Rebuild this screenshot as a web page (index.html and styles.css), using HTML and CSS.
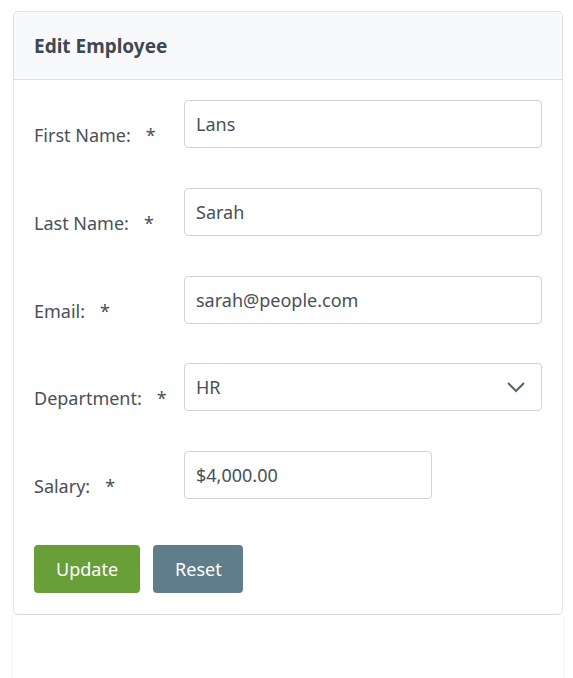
FILE: index.html
```html
<!DOCTYPE html>
<html>
<head>
<meta charset="utf-8">
<link rel="stylesheet" href="styles.css">
</head>
<body>
<div class="page">
  <div class="card">
    <div class="card-header">Edit Employee</div>
    <form class="card-body">
      <div class="row">
        <label class="label">First Name:<span class="req">*</span></label>
        <div class="field"><div class="input">Lans</div></div>
      </div>
      <div class="row">
        <label class="label">Last Name:<span class="req">*</span></label>
        <div class="field"><div class="input">Sarah</div></div>
      </div>
      <div class="row">
        <label class="label">Email:<span class="req">*</span></label>
        <div class="field"><div class="input">sarah@people.com</div></div>
      </div>
      <div class="row">
        <label class="label">Department:<span class="req">*</span></label>
        <div class="field">
          <div class="input select">HR
            <svg class="chev" width="20" height="12" viewBox="0 0 20 12"><path d="M2 2 L10 10 L18 2" fill="none" stroke="#5a6570" stroke-width="2.2"/></svg>
          </div>
        </div>
      </div>
      <div class="row">
        <label class="label">Salary:<span class="req">*</span></label>
        <div class="field"><div class="input short">$4,000.00</div></div>
      </div>
      <div class="buttons">
        <button type="button" class="btn btn-update">Update</button>
        <button type="button" class="btn btn-reset">Reset</button>
      </div>
    </form>
  </div>
  <div class="card-next"></div>
</div>
</body>
</html>
```
FILE: styles.css
```css
* { box-sizing: border-box; }
html, body { margin: 0; padding: 0; background: #fff; }
body {
  font-family: "Noto Sans", "Open Sans", sans-serif;
  color: #495057;
}
.page {
  padding: 11px 10px 0 13px;
}
.card {
  width: 550px;
  border: 1px solid #dee2e6;
  border-radius: 5px;
  background: #fff;
}
.card-header {
  height: 68px;
  background: #f8f9fa;
  border-bottom: 1px solid #dee2e6;
  border-radius: 5px 5px 0 0;
  padding: 0 20px;
  display: flex;
  align-items: center;
  font-size: 19px;
  font-weight: 700;
  color: #3f4851;
}
.card-body {
  padding: 20px 20px 21px 20px;
  margin: 0;
}
.row {
  display: flex;
  height: 48px;
  margin-bottom: 39.75px;
  align-items: flex-start;
}
.label {
  width: 150px;
  flex: none;
  font-size: 18px;
  padding-top: 23px;
  line-height: 25px;
}
.req {
  margin-left: 15px;
}
.field {
  flex: 1;
}
.input {
  height: 48px;
  border: 1px solid #ced4da;
  border-radius: 4px;
  padding: 0 11px;
  display: flex;
  align-items: center;
  font-size: 18px;
  color: #495057;
  background: #fff;
}
.input.short {
  width: 248px;
}
.select {
  justify-content: space-between;
  padding-right: 15px;
}
.chev { display: block; }
.buttons {
  display: flex;
  gap: 13px;
  padding-top: 6px;
}
.btn {
  height: 48px;
  border: none;
  border-radius: 4px;
  font-family: inherit;
  font-size: 18px;
  color: #fff;
  padding: 0 22px 0 22px;
  cursor: pointer;
}
.btn-update { background: #689f38; }
.btn-reset { background: #607d8b; padding-right: 21px; }
.card-next {
  width: 550px;
  height: 70px;
  margin-top: 0;
  box-shadow: 0 1px 3px rgba(0,0,0,0.08), 0 0 2px rgba(0,0,0,0.06);
  background: #fff;
}
```
